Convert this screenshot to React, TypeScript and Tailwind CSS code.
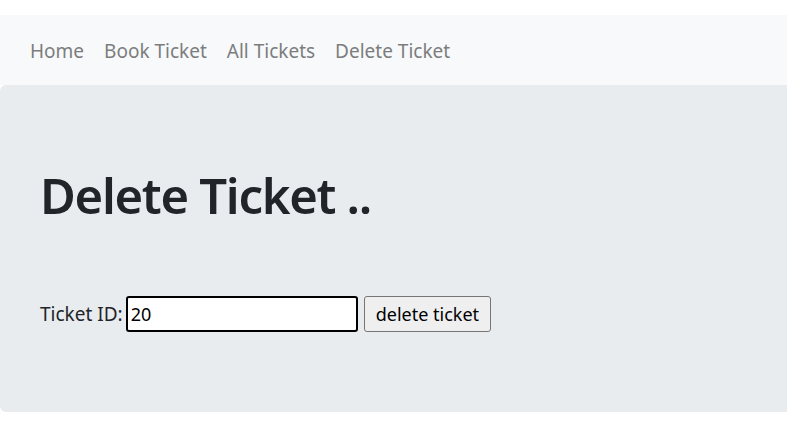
import { useState } from "react";

const links = ["Home", "Book Ticket", "All Tickets", "Delete Ticket"];

function NavBar() {
  return (
    <nav className="mt-[15px] flex h-[70px] items-center bg-[#f8f9fa] px-[20px]">
      <ul className="flex">
        {links.map((l) => (
          <li key={l}>
            <a href="#" className="block px-[10px] pt-[11px] pb-[9px] text-[19px] leading-[30px] text-[#7c7d7e]">
              {l}
            </a>
          </li>
        ))}
      </ul>
    </nav>
  );
}

export default function App() {
  const [id, setId] = useState("20");
  return (
    <div className="w-[787px] font-['Noto_Sans',sans-serif] text-[#212529]">
      <NavBar />
      <div className="h-[327px] rounded-l-[6px] bg-[#e9ecef] px-[40px] pt-[80px]">
        <h1 className="text-[49px] font-semibold leading-[60px] tracking-[-1.3px]">Delete Ticket ..</h1>
        <form className="mt-[71px] flex items-center" onSubmit={(e) => e.preventDefault()}>
          <label className="mr-[3px] text-[19px] leading-[30px]">Ticket ID:</label>
          <input
            value={id}
            onChange={(e) => setId(e.target.value)}
            className="h-[36px] w-[232px] rounded-[3px] border-2 border-black bg-white px-[3px] text-[18px] text-black outline-none"
          />
          <button
            type="submit"
            className="ml-[6px] h-[36px] rounded-[3px] border border-[#767676] bg-[#efefef] px-[11px] text-[18px] text-black"
          >
            delete ticket
          </button>
        </form>
      </div>
    </div>
  );
}
